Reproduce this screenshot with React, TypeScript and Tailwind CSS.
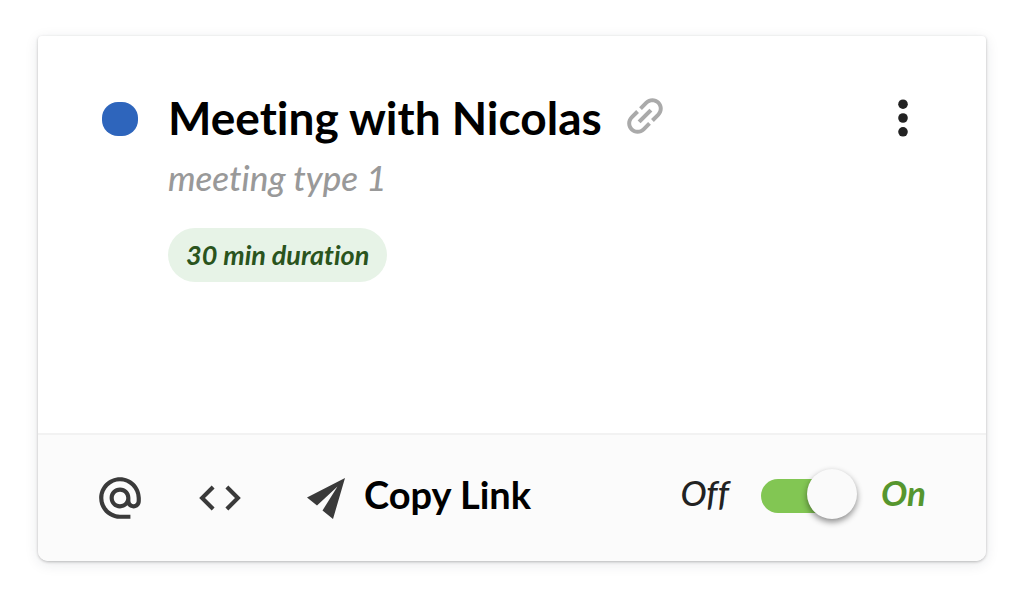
import { MdAlternateEmail, MdCode, MdLink } from 'react-icons/md'

function PaperPlane({ className }: { className?: string }) {
  return (
    <svg viewBox="0 0 38 41" className={className} fill="currentColor" aria-hidden="true">
      <path d="M38 0 L26 41 L15.5 32.5 L30.5 8.5 L10 27.5 L0 19.5 Z" />
    </svg>
  )
}

function MoreDots({ className }: { className?: string }) {
  return (
    <svg viewBox="0 0 10 38" className={className} fill="currentColor" aria-hidden="true">
      <circle cx="5" cy="5.2" r="4.8" />
      <circle cx="5" cy="19" r="4.8" />
      <circle cx="5" cy="32.8" r="4.8" />
    </svg>
  )
}

function CardHeader() {
  return (
    <div className="flex h-[397px] items-start pt-[55px] pr-16 pl-16">
      <span className="mt-[11px] h-[34px] w-9 shrink-0 rounded-[16px] bg-[#2e65bc]" />
      <div className="ml-[30px] min-w-0 flex-1">
        <div className="flex items-center">
          <h2 className="text-[46px] leading-[54px] font-bold text-black">Meeting with Nicolas</h2>
          <a href="#link" aria-label="Open meeting page" className="ml-[18px] pb-1 text-[#aaaaaa]">
            <MdLink className="size-[50px] -rotate-45" />
          </a>
        </div>
        <p className="mt-2 text-[35px] leading-[48px] font-medium text-[#999999] italic">meeting type 1</p>
        <span className="mt-[27px] inline-block rounded-full bg-[#e7f3e7] px-[18px] text-[27px] leading-[54px] font-bold text-[#2a541d] italic">
          30 min duration
        </span>
      </div>
      <button type="button" aria-label="More options" className="mt-2 flex w-[38px] justify-center text-[#222222]">
        <MoreDots className="h-[38px] w-[10px]" />
      </button>
    </div>
  )
}

function CardFooter() {
  return (
    <div className="flex h-32 items-center rounded-b-[10px] border-t-2 border-[#f2f2f2] bg-[#fbfbfb] pr-[60px] pl-[57px] text-[38px] leading-[48px]">
      <button type="button" aria-label="Email" className="text-[#3a3a3a]">
        <MdAlternateEmail className="size-[50px]" />
      </button>
      <button type="button" aria-label="Embed" className="ml-[50px] text-[#3a3a3a]">
        <MdCode className="size-[50px]" />
      </button>
      <button type="button" className="ml-[62px] flex items-center font-bold text-black">
        <PaperPlane className="mr-[19px] h-[41px] w-[38px] text-[#3a3a3a]" />
        <span className="pb-2">Copy Link</span>
      </button>
      <label className="ml-auto flex items-center pb-1">
        <span className="pb-2 text-[35px] font-medium text-[#222222] italic">Off</span>
        <input
          type="checkbox"
          role="switch"
          defaultChecked
          aria-label="Meeting active"
          className="relative mr-6 ml-8 h-[34px] w-24 appearance-none rounded-full bg-gray-300 bg-clip-content pr-[10px] before:absolute before:-top-[10px] before:left-0 before:size-[50px] before:rounded-full before:bg-[#fafafa] before:shadow-[0_3px_6px_rgba(0,0,0,0.45)] checked:bg-[#82c653] checked:before:right-0 checked:before:left-auto"
        />
        <span className="pb-2 text-[35px] font-bold text-[#56962e] italic">On</span>
      </label>
    </div>
  )
}

export default function App() {
  return (
    <main className="min-h-screen bg-white px-[38px] py-9 font-['Lato',sans-serif] [font-variant-ligatures:none]">
      <section className="rounded-t-[4px] rounded-b-[10px] bg-white shadow-[0_1px_3px_rgba(0,0,0,0.24),0_3px_14px_rgba(30,35,60,0.1)]">
        <CardHeader />
        <CardFooter />
      </section>
    </main>
  )
}
